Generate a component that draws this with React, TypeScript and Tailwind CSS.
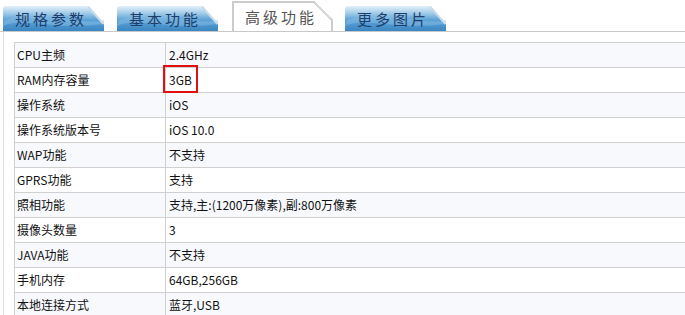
import React from "react";

const rows: [string, string][] = [
  ["CPU主频", "2.4GHz"],
  ["RAM内存容量", "3GB"],
  ["操作系统", "iOS"],
  ["操作系统版本号", "iOS 10.0"],
  ["WAP功能", "不支持"],
  ["GPRS功能", "支持"],
  ["照相功能", "支持,主:(1200万像素),副:800万像素"],
  ["摄像头数量", "3"],
  ["JAVA功能", "不支持"],
  ["手机内存", "64GB,256GB"],
  ["本地连接方式", "蓝牙,USB"],
];

const font = { fontFamily: '"SimSun", "Noto Sans CJK SC", "Noto Sans", sans-serif' };

function BlueTab({ label, ml }: { label: string; ml: string }) {
  return (
    <div className={`relative w-[101px] h-[25px] ${ml}`}>
      <svg className="absolute inset-0" width="101" height="25" viewBox="0 0 101 25">
        <defs>
          <linearGradient id={`g-${label}`} x1="0" y1="0" x2="0" y2="1">
            <stop offset="0" stopColor="#e3f0f9" />
            <stop offset="0.3" stopColor="#9fc9e8" />
            <stop offset="0.55" stopColor="#5ea3d6" />
            <stop offset="1" stopColor="#3a86c3" />
          </linearGradient>
        </defs>
        <path d="M0 25 L0 3 Q0 0 3 0 L85 0 L101 18 L101 25 Z" fill={`url(#g-${label})`} />
        <path d="M2 14 Q30 6 60 12 T101 14 L101 18 Q70 22 40 18 T0 20 Z" fill="#8cc0e6" opacity="0.45" />
        <path d="M85 0.5 L100.5 18" stroke="#c8dcea" strokeWidth="2" fill="none" />
      </svg>
      <span
        className="absolute left-[12px] top-[4px] text-[15px] leading-[17px] tracking-[3px] text-[#1d3d6b]"
        style={font}
      >
        {label}
      </span>
    </div>
  );
}

function ActiveTab({ label, ml }: { label: string; ml: string }) {
  return (
    <div className={`relative w-[101px] h-[30px] ${ml}`}>
      <svg className="absolute inset-0" width="101" height="30" viewBox="0 0 101 30">
        <path d="M1 30 L1 1 L82 1 L100 19 L100 30" fill="#ffffff" stroke="#cccccc" strokeWidth="2" />
        <path d="M84 2.5 L98.5 17" stroke="#e6e6e6" strokeWidth="1" fill="none" />
      </svg>
      <span
        className="absolute left-[13px] top-[7px] text-[15px] leading-[17px] tracking-[3px] text-[#555555]"
        style={font}
      >
        {label}
      </span>
    </div>
  );
}

export default function App() {
  return (
    <div className="w-[685px] h-[315px] overflow-hidden bg-white relative" style={font}>
      <div className="flex items-end h-[32px] border-b border-[#c8c8c8]">
        <BlueTab label="规格参数" ml="ml-[3px]" />
        <BlueTab label="基本功能" ml="ml-[13px]" />
        <ActiveTab label="高级功能" ml="ml-[14px]" />
        <BlueTab label="更多图片" ml="ml-[12px]" />
      </div>
      <div className="ml-[3px] border-l border-[#e2e2e2] pt-[10px] pl-[10px] h-[300px]">
        <div className="w-[720px] border-t border-l border-[#d0d0d0]">
          {rows.map(([k, v], i) => (
            <div
              key={k}
              className={`flex h-[25px] border-b border-[#d0d0d0] ${i % 2 === 0 ? "bg-[#f8f9fd]" : "bg-white"}`}
            >
              <div className="w-[151px] shrink-0 border-r border-[#d0d0d0] pl-[2px] flex items-center text-[12px] text-[#111]">
                {k}
              </div>
              <div className="flex-1 pl-[3px] flex items-center text-[12px] text-[#111]">{v}</div>
            </div>
          ))}
        </div>
      </div>
      <div className="absolute left-[163px] top-[65px] w-[35px] h-[28px] border-2 border-[#e01010]" />
    </div>
  );
}
